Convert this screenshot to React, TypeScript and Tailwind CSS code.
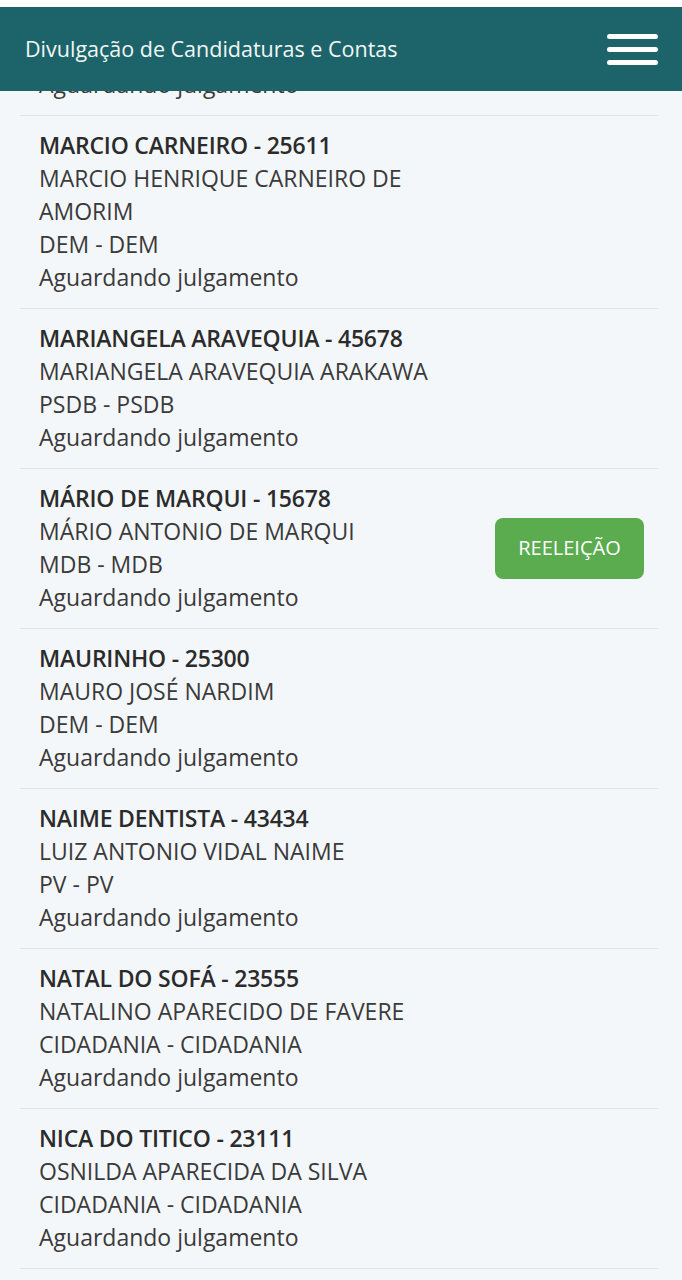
import React from 'react';

type Candidato = {
  titulo: string;
  nome: string;
  partido: string;
  situacao: string;
  reeleicao?: boolean;
};

const candidatos: Candidato[] = [
  { titulo: 'MARCIO CARNEIRO - 25611', nome: 'MARCIO HENRIQUE CARNEIRO DE AMORIM', partido: 'DEM - DEM', situacao: 'Aguardando julgamento' },
  { titulo: 'MARIANGELA ARAVEQUIA - 45678', nome: 'MARIANGELA ARAVEQUIA ARAKAWA', partido: 'PSDB - PSDB', situacao: 'Aguardando julgamento' },
  { titulo: 'MÁRIO DE MARQUI - 15678', nome: 'MÁRIO ANTONIO DE MARQUI', partido: 'MDB - MDB', situacao: 'Aguardando julgamento', reeleicao: true },
  { titulo: 'MAURINHO - 25300', nome: 'MAURO JOSÉ NARDIM', partido: 'DEM - DEM', situacao: 'Aguardando julgamento' },
  { titulo: 'NAIME DENTISTA - 43434', nome: 'LUIZ ANTONIO VIDAL NAIME', partido: 'PV - PV', situacao: 'Aguardando julgamento' },
  { titulo: 'NATAL DO SOFÁ - 23555', nome: 'NATALINO APARECIDO DE FAVERE', partido: 'CIDADANIA - CIDADANIA', situacao: 'Aguardando julgamento' },
  { titulo: 'NICA DO TITICO - 23111', nome: 'OSNILDA APARECIDA DA SILVA', partido: 'CIDADANIA - CIDADANIA', situacao: 'Aguardando julgamento' },
];

const CandidatoItem = ({ c }: { c: Candidato }) => (
  <div className="flex items-center justify-between border-b border-[#e1e5e9] pt-[13px] pb-[14px] pl-[19px] pr-[14px]">
    <div className="w-[405px] text-[23px] leading-[33px] text-[#3a3a3a]">
      <div className="font-semibold tracking-[-0.2px] text-[#2b2b2b]">{c.titulo}</div>
      <div>{c.nome}</div>
      <div>{c.partido}</div>
      <div>{c.situacao}</div>
    </div>
    {c.reeleicao && (
      <div className="flex h-[61px] w-[149px] items-center justify-center rounded-[8px] bg-[#5aac4f] text-[20px] text-white">
        REELEIÇÃO
      </div>
    )}
  </div>
);

export default function App() {
  return (
    <div className="relative h-[1280px] w-[682px] overflow-hidden bg-[#f4f7fa]" style={{ fontFamily: '"Open Sans", "Noto Sans", sans-serif' }}>
      {/* lista */}
      <div className="ml-[20px] mr-[24px] mt-[-11px]">
        <div className="border-b border-[#e1e5e9] pt-[13px] pb-[14px] pl-[19px] text-[23px] leading-[33px] text-[#3a3a3a]">
          <div className="font-semibold text-[#2b2b2b]">MARCELO - 11111</div>
          <div>DEM - DEM</div>
          <div>Aguardando julgamento</div>
        </div>
        {candidatos.map((c, idx) => (
          <CandidatoItem key={idx} c={c} />
        ))}
      </div>

      {/* Header */}
      <div className="absolute left-0 right-0 top-0 h-[7px] bg-white" />
      <div className="absolute left-0 right-0 top-[7px] flex h-[84px] items-center justify-between bg-[#1c6469] pl-[25px] pr-[24px]">
        <span className="text-[21.5px] text-[#f2f7f7]">Divulgação de Candidaturas e Contas</span>
        <div className="flex w-[51px] flex-col gap-[8px]">
          <div className="h-[5px] rounded-full bg-white" />
          <div className="h-[5px] rounded-full bg-white" />
          <div className="h-[5px] rounded-full bg-white" />
        </div>
      </div>
    </div>
  );
}
